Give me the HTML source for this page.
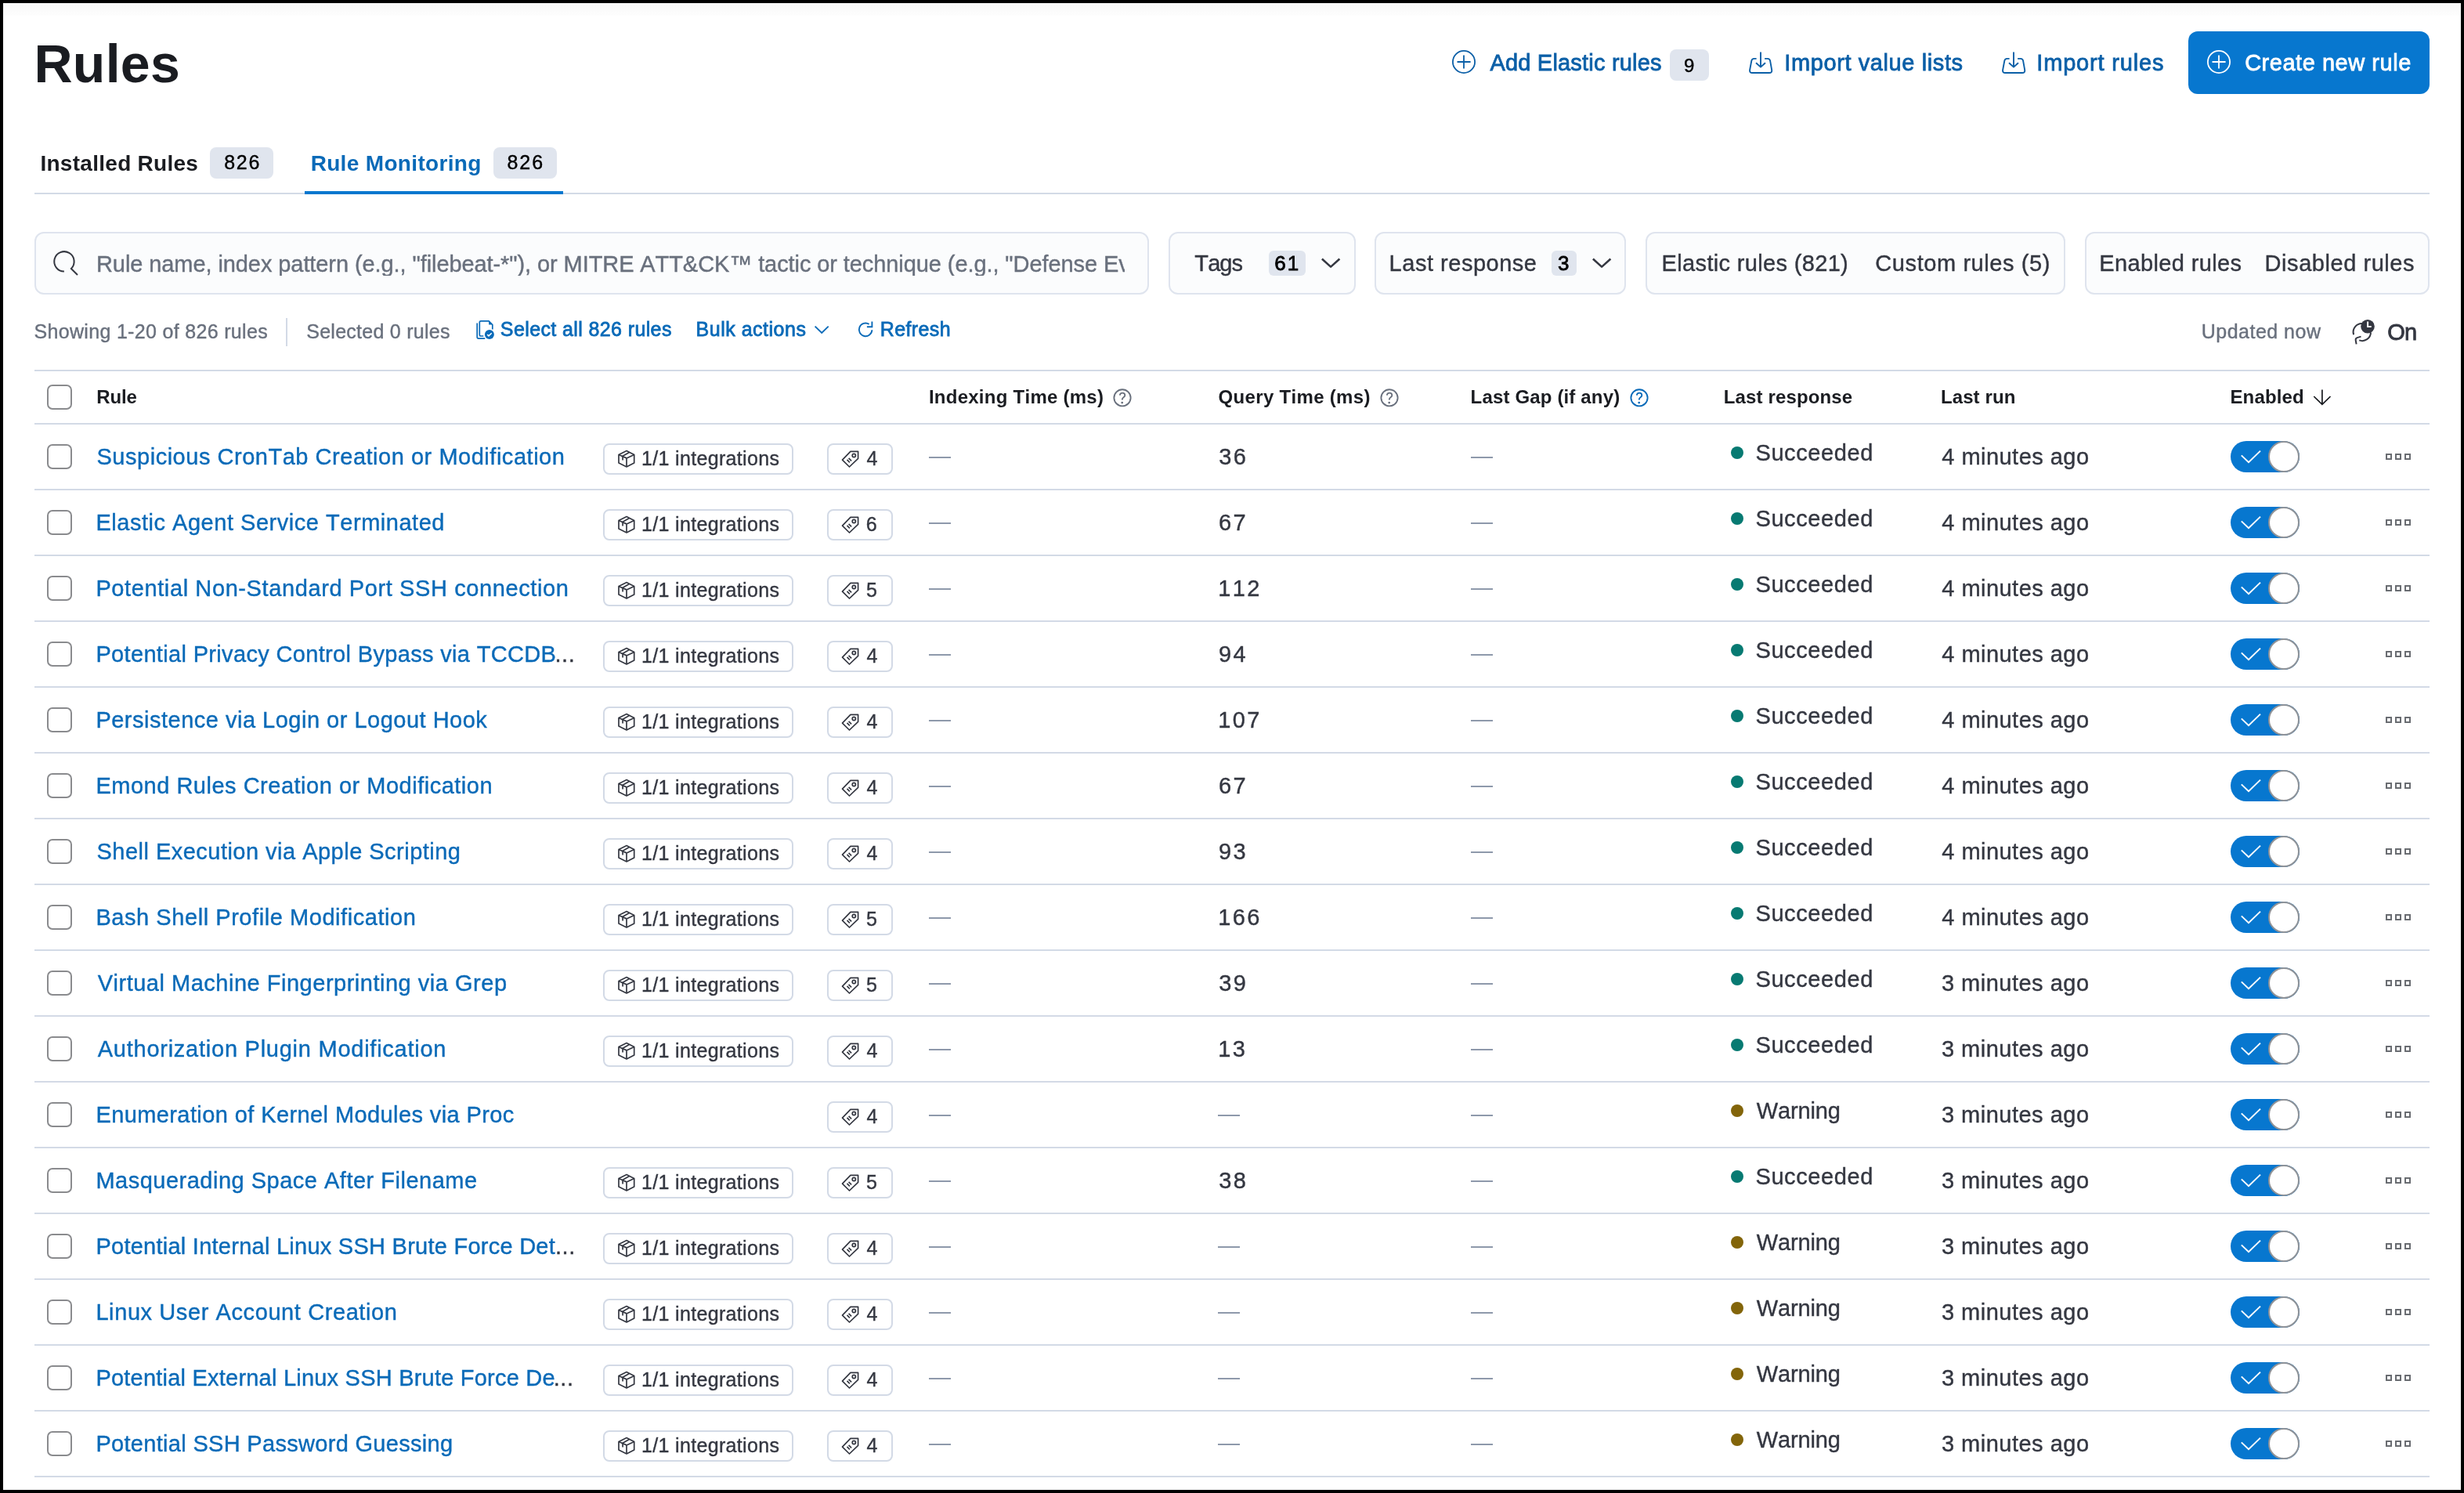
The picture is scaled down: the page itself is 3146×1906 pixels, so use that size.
<!DOCTYPE html>
<html><head><meta charset="utf-8"><title>Rules</title><style>
html,body{margin:0;padding:0;}
body{width:3146px;height:1906px;position:relative;overflow:hidden;background:#fff;font-family:"Liberation Sans",sans-serif;font-kerning:none;}
.frame{position:absolute;left:0;top:0;width:3138px;height:1898px;border:4px solid #000;}
.t{position:absolute;white-space:nowrap;}
.wrap{position:absolute;left:0;top:0;width:3146px;height:1906px;will-change:transform;}
.b{position:absolute;}
.s{position:absolute;overflow:visible;}
</style></head><body><div class="wrap">
<div class="b" style="left:4px;top:5px;width:3138px;height:15px;background:linear-gradient(#f9f9f9,#fdfdfd);"></div>
<div class="t" style="left:43.45px;top:47px;font-size:68px;line-height:68px;color:#1a1c21;letter-spacing:0.291px;font-weight:700;">Rules</div>
<svg class="s" style="left:1850px;top:60px;" width="38" height="38" viewBox="0 0 38 38" fill="none"><g stroke="#0b5fa7" stroke-width="1.8"><circle cx="19" cy="19" r="14.1"/><path d="M10.5 19H27.6M19 10.4V27.6"/></g></svg>
<div class="t" style="left:1902.44px;top:66px;font-size:29px;line-height:29px;color:#0b5fa7;letter-spacing:0.195px;-webkit-text-stroke:0.8px currentColor;">Add Elastic rules</div>
<div class="b" style="left:2132px;top:63px;width:50px;height:40px;background:#e0e5ee;border-radius:8px;"></div>
<div class="t" style="left:2149.88px;top:72px;font-size:24px;line-height:24px;color:#000;letter-spacing:2.314px;-webkit-text-stroke:0.4px currentColor;">9</div>
<svg class="s" style="left:2226px;top:60px;" width="44" height="40" viewBox="0 0 44 40" fill="none"><g stroke="#0b5fa7" stroke-width="1.9" stroke-linejoin="round"><path d="M16.6 14.9H13.6Q10.8 14.9 10.3 17.7L8.1 29.4Q7.6 33 11.3 33H33Q36.7 33 36.2 29.4L34.1 17.7Q33.6 14.9 30.8 14.9H27.1"/><path d="M22 6.4V25.4M16 20.2L22 25.6L28 20.2"/></g></svg>
<div class="t" style="left:2278.32px;top:66px;font-size:29px;line-height:29px;color:#0b5fa7;letter-spacing:0.597px;-webkit-text-stroke:0.8px currentColor;">Import value lists</div>
<svg class="s" style="left:2549px;top:60px;" width="44" height="40" viewBox="0 0 44 40" fill="none"><g stroke="#0b5fa7" stroke-width="1.9" stroke-linejoin="round"><path d="M16.6 14.9H13.6Q10.8 14.9 10.3 17.7L8.1 29.4Q7.6 33 11.3 33H33Q36.7 33 36.2 29.4L34.1 17.7Q33.6 14.9 30.8 14.9H27.1"/><path d="M22 6.4V25.4M16 20.2L22 25.6L28 20.2"/></g></svg>
<div class="t" style="left:2600.32px;top:66px;font-size:29px;line-height:29px;color:#0b5fa7;letter-spacing:0.820px;-webkit-text-stroke:0.8px currentColor;">Import rules</div>
<div class="b" style="left:2794px;top:40px;width:308px;height:80px;background:#0777cf;border-radius:12px;"></div>
<svg class="s" style="left:2814px;top:60px;" width="38" height="38" viewBox="0 0 38 38" fill="none"><g stroke="#fff" stroke-width="1.8"><circle cx="19" cy="19" r="14.1"/><path d="M10.5 19H27.6M19 10.4V27.6"/></g></svg>
<div class="t" style="left:2866.13px;top:66px;font-size:29px;line-height:29px;color:#fff;letter-spacing:0.532px;-webkit-text-stroke:0.8px currentColor;">Create new rule</div>
<div class="t" style="left:51.43px;top:195px;font-size:28px;line-height:28px;color:#1a1c21;letter-spacing:0.279px;font-weight:700;">Installed Rules</div>
<div class="b" style="left:268px;top:188px;width:81px;height:40px;background:#e0e5ee;border-radius:8px;"></div>
<div class="t" style="left:286.21px;top:195px;font-size:25px;line-height:25px;color:#000;letter-spacing:1.737px;-webkit-text-stroke:0.4px currentColor;">826</div>
<div class="t" style="left:396.63px;top:195px;font-size:28px;line-height:28px;color:#0a6ab8;letter-spacing:0.334px;font-weight:700;">Rule Monitoring</div>
<div class="b" style="left:630px;top:188px;width:81px;height:40px;background:#e0e5ee;border-radius:8px;"></div>
<div class="t" style="left:647.41px;top:195px;font-size:25px;line-height:25px;color:#000;letter-spacing:1.987px;-webkit-text-stroke:0.4px currentColor;">826</div>
<div class="b" style="left:44px;top:246px;width:3058px;height:2px;background:#d3dae6;"></div>
<div class="b" style="left:389px;top:244px;width:330px;height:4px;background:#0777cf;"></div>
<div class="b" style="left:44px;top:296px;width:1423px;height:80px;background:#fbfcfd;border:2px solid #dfe4ee;border-radius:12px;box-sizing:border-box;"></div>
<svg class="s" style="left:60px;top:312px;" width="48" height="48" viewBox="0 0 48 48" fill="none"><path d="M21.9 34.6A12.7 12.7 0 1 1 30.9 30.9L39 39" stroke="#343741" stroke-width="2"/></svg>
<div class="t" style="left:123.02px;top:323px;font-size:29px;line-height:29px;color:#69707d;letter-spacing:-0.086px;-webkit-text-stroke:0.4px currentColor;width:1313.0px;overflow:hidden;">Rule name, index pattern (e.g., &quot;filebeat-*&quot;), or MITRE ATT&amp;CK™ tactic or technique (e.g., &quot;Defense Evasion&quot;)</div>
<div class="b" style="left:1492px;top:296px;width:239px;height:80px;background:#fbfcfd;border:2px solid #dfe4ee;border-radius:12px;box-sizing:border-box;"></div>
<div class="t" style="left:1525.35px;top:322px;font-size:29px;line-height:29px;color:#343741;letter-spacing:-0.924px;-webkit-text-stroke:0.4px currentColor;">Tags</div>
<div class="b" style="left:1620px;top:320px;width:47px;height:32px;background:#e0e5ee;border-radius:6px;"></div>
<div class="t" style="left:1627.28px;top:323px;font-size:26px;line-height:26px;color:#000;letter-spacing:2.070px;-webkit-text-stroke:0.8px currentColor;">61</div>
<svg class="s" style="left:1680px;top:320px;" width="40" height="32" viewBox="0 0 40 32" fill="none"><path d="M7.9 10.5L19.1 20.6L30.4 10.5" stroke="#343741" stroke-width="2.6" stroke-linejoin="round"/></svg>
<div class="b" style="left:1755px;top:296px;width:321px;height:80px;background:#fbfcfd;border:2px solid #dfe4ee;border-radius:12px;box-sizing:border-box;"></div>
<div class="t" style="left:1773.62px;top:322px;font-size:29px;line-height:29px;color:#343741;letter-spacing:0.516px;-webkit-text-stroke:0.4px currentColor;">Last response</div>
<div class="b" style="left:1981px;top:320px;width:32px;height:32px;background:#e0e5ee;border-radius:6px;"></div>
<div class="t" style="left:1989.01px;top:323px;font-size:26px;line-height:26px;color:#000;letter-spacing:0.673px;-webkit-text-stroke:0.8px currentColor;">3</div>
<svg class="s" style="left:2026px;top:320px;" width="40" height="32" viewBox="0 0 40 32" fill="none"><path d="M7.9 10.5L19.1 20.6L30.4 10.5" stroke="#343741" stroke-width="2.6" stroke-linejoin="round"/></svg>
<div class="b" style="left:2101px;top:296px;width:536px;height:80px;background:#fbfcfd;border:2px solid #dfe4ee;border-radius:12px;box-sizing:border-box;"></div>
<div class="t" style="left:2121.62px;top:322px;font-size:29px;line-height:29px;color:#343741;letter-spacing:0.338px;-webkit-text-stroke:0.4px currentColor;">Elastic rules (821)</div>
<div class="t" style="left:2394.33px;top:322px;font-size:29px;line-height:29px;color:#343741;letter-spacing:0.583px;-webkit-text-stroke:0.4px currentColor;">Custom rules (5)</div>
<div class="b" style="left:2662px;top:296px;width:440px;height:80px;background:#fbfcfd;border:2px solid #dfe4ee;border-radius:12px;box-sizing:border-box;"></div>
<div class="t" style="left:2680.22px;top:322px;font-size:29px;line-height:29px;color:#343741;letter-spacing:0.374px;-webkit-text-stroke:0.4px currentColor;">Enabled rules</div>
<div class="t" style="left:2891.62px;top:322px;font-size:29px;line-height:29px;color:#343741;letter-spacing:0.552px;-webkit-text-stroke:0.4px currentColor;">Disabled rules</div>
<div class="t" style="left:43.46px;top:411px;font-size:25px;line-height:25px;color:#69707d;letter-spacing:0.324px;-webkit-text-stroke:0.4px currentColor;">Showing 1-20 of 826 rules</div>
<div class="b" style="left:365px;top:406px;width:2px;height:36px;background:#d3dae6;"></div>
<div class="t" style="left:391.26px;top:411px;font-size:25px;line-height:25px;color:#69707d;letter-spacing:0.258px;-webkit-text-stroke:0.4px currentColor;">Selected 0 rules</div>
<svg class="s" style="left:600px;top:404px;" width="40" height="36" viewBox="0 0 40 36" fill="none"><g stroke="#0a6ab8" stroke-width="1.7" stroke-linejoin="round"><path d="M9.2 8.6V26.3Q9.2 28.1 11 28.1H19.3"/><path d="M17.3 25H14Q12.3 25 12.3 23.3V7.5Q12.3 5.8 14 5.8H24.1L28.8 10.5V16.4"/></g><path d="M24.1 5.8V10.5H28.8Z" fill="#0a6ab8"/><circle cx="24.9" cy="22.9" r="6" fill="#0a6ab8"/><path d="M22.2 23.1L24 24.9L27.7 21.2" stroke="#fff" stroke-width="1.5"/></svg>
<div class="t" style="left:638.86px;top:408px;font-size:25px;line-height:25px;color:#0a6ab8;letter-spacing:0.385px;-webkit-text-stroke:0.8px currentColor;">Select all 826 rules</div>
<div class="t" style="left:888.55px;top:408px;font-size:25px;line-height:25px;color:#0a6ab8;letter-spacing:0.506px;-webkit-text-stroke:0.8px currentColor;">Bulk actions</div>
<svg class="s" style="left:1036px;top:410px;" width="26" height="20" viewBox="0 0 26 20" fill="none"><path d="M4.6 6.6L13.2 15L21.7 6.6" stroke="#0a6ab8" stroke-width="1.9"/></svg>
<svg class="s" style="left:1088px;top:404px;" width="34" height="32" viewBox="0 0 34 32" fill="none"><g stroke="#0a6ab8" stroke-width="1.9"><path d="M21.6 9.9A8.3 8.3 0 1 0 25.4 17.3"/><path d="M25.4 6.4V13.2H18.9"/></g></svg>
<div class="t" style="left:1123.75px;top:408px;font-size:25px;line-height:25px;color:#0a6ab8;letter-spacing:0.390px;-webkit-text-stroke:0.8px currentColor;">Refresh</div>
<div class="t" style="left:2810.77px;top:411px;font-size:25px;line-height:25px;color:#69707d;letter-spacing:0.484px;-webkit-text-stroke:0.4px currentColor;">Updated now</div>
<svg class="s" style="left:2996px;top:400px;" width="44" height="46" viewBox="0 0 44 46" fill="none"><g stroke="#343741" stroke-width="2"><path d="M20.4 13A11 11 0 0 0 9.1 27.2"/><path d="M16.2 34.4A11 11 0 0 0 31 24.4"/><path d="M18.5 29.6L13.6 31.1Q11.3 31.9 11.7 34.3L12.6 39.4"/></g><circle cx="27" cy="16.8" r="8.8" fill="#343741"/><path d="M27.1 10.6V17.1H31.7" stroke="#fff" stroke-width="2"/></svg>
<div class="t" style="left:3048.23px;top:410px;font-size:29px;line-height:29px;color:#343741;letter-spacing:-0.829px;-webkit-text-stroke:0.8px currentColor;">On</div>
<div class="b" style="left:44px;top:472px;width:3058px;height:2px;background:#d3dae6;"></div>
<div class="b" style="left:60px;top:491px;width:32px;height:32px;border:2px solid #8a8b8e;border-radius:7px;box-sizing:border-box;background:#fff;"></div>
<div class="t" style="left:123.19px;top:495px;font-size:24px;line-height:24px;color:#1a1c21;letter-spacing:-0.127px;font-weight:700;">Rule</div>
<div class="t" style="left:1185.89px;top:495px;font-size:24px;line-height:24px;color:#1a1c21;letter-spacing:0.259px;font-weight:700;">Indexing Time (ms)</div>
<svg class="s" style="left:1414px;top:490px;" width="38" height="36" viewBox="0 0 38 36" fill="none"><g stroke="#69707d" stroke-width="1.9"><circle cx="19" cy="17.8" r="10.6"/><path d="M15.8 14.6Q16.1 11.6 19.1 11.6Q22.3 11.6 22.3 14.5Q22.3 16.1 20.5 17.3Q18.8 18.4 18.8 20.6"/></g><circle cx="18.7" cy="24.1" r="1.4" fill="#69707d"/></svg>
<div class="t" style="left:1555.62px;top:495px;font-size:24px;line-height:24px;color:#1a1c21;letter-spacing:0.314px;font-weight:700;">Query Time (ms)</div>
<svg class="s" style="left:1755px;top:490px;" width="38" height="36" viewBox="0 0 38 36" fill="none"><g stroke="#69707d" stroke-width="1.9"><circle cx="19" cy="17.8" r="10.6"/><path d="M15.8 14.6Q16.1 11.6 19.1 11.6Q22.3 11.6 22.3 14.5Q22.3 16.1 20.5 17.3Q18.8 18.4 18.8 20.6"/></g><circle cx="18.7" cy="24.1" r="1.4" fill="#69707d"/></svg>
<div class="t" style="left:1877.59px;top:495px;font-size:24px;line-height:24px;color:#1a1c21;letter-spacing:0.161px;font-weight:700;">Last Gap (if any)</div>
<svg class="s" style="left:2074px;top:490px;" width="38" height="36" viewBox="0 0 38 36" fill="none"><g stroke="#0a6ab8" stroke-width="1.9"><circle cx="19" cy="17.8" r="10.6"/><path d="M15.8 14.6Q16.1 11.6 19.1 11.6Q22.3 11.6 22.3 14.5Q22.3 16.1 20.5 17.3Q18.8 18.4 18.8 20.6"/></g><circle cx="18.7" cy="24.1" r="1.4" fill="#0a6ab8"/></svg>
<div class="t" style="left:2200.79px;top:495px;font-size:24px;line-height:24px;color:#1a1c21;letter-spacing:0.133px;font-weight:700;">Last response</div>
<div class="t" style="left:2477.89px;top:495px;font-size:24px;line-height:24px;color:#1a1c21;letter-spacing:0.131px;font-weight:700;">Last run</div>
<div class="t" style="left:2847.39px;top:495px;font-size:24px;line-height:24px;color:#1a1c21;letter-spacing:0.173px;font-weight:700;">Enabled</div>
<svg class="s" style="left:2950px;top:494px;" width="30" height="26" viewBox="0 0 30 26" fill="none"><path d="M14.9 3.6V22.2M4.3 12L14.9 22.4L25.5 12" stroke="#1a1c21" stroke-width="1.7"/></svg>
<div class="b" style="left:44px;top:540px;width:3058px;height:2px;background:#d3dae6;"></div>
<div class="b" style="left:60px;top:567px;width:32px;height:32px;border:2px solid #8a8b8e;border-radius:7px;box-sizing:border-box;background:#fff;"></div>
<div class="t" style="left:123.48px;top:569px;font-size:29px;line-height:29px;color:#0a6ab8;letter-spacing:0.523px;-webkit-text-stroke:0.4px currentColor;">Suspicious CronTab Creation or Modification</div>
<div class="b" style="left:770px;top:566px;width:243px;height:40px;border:2px solid #d3dae6;border-radius:8px;box-sizing:border-box;"></div>
<svg class="s" style="left:780px;top:566px;" width="50" height="40" viewBox="0 0 50 40" fill="none"><g stroke="#343741" stroke-width="1.7" stroke-linejoin="round"><path d="M20 9.6L10 14.5V24.9L20 30L29.7 24.9V14.5Z"/><path d="M10 14.5L20 18.9L29.7 14.5M20 18.9V30"/><path d="M23.4 11.4L15.1 16.2V21.6"/></g></svg>
<div class="t" style="left:819.10px;top:573px;font-size:25px;line-height:25px;color:#343741;letter-spacing:0.324px;-webkit-text-stroke:0.4px currentColor;">1/1 integrations</div>
<div class="b" style="left:1056px;top:566px;width:84px;height:40px;border:2px solid #d3dae6;border-radius:8px;box-sizing:border-box;"></div>
<svg class="s" style="left:1066px;top:566px;" width="70" height="40" viewBox="0 0 70 40" fill="none"><g stroke="#343741" stroke-width="1.7" stroke-linejoin="round"><path d="M19.9 10.4H29.6V19.4L18.5 30L9.5 21.2Z"/><circle cx="24.3" cy="15.5" r="2.1"/><path d="M15.5 20.9L18.9 24.3M17.6 18.8L21.1 22.3"/></g></svg>
<div class="t" style="left:1106.43px;top:573px;font-size:25px;line-height:25px;color:#343741;letter-spacing:0.000px;-webkit-text-stroke:0.4px currentColor;">4</div>
<div class="b" style="left:1186px;top:583px;width:28px;height:2px;background:#8e99ab;"></div>
<div class="t" style="left:1556.30px;top:569px;font-size:29px;line-height:29px;color:#343741;letter-spacing:2.400px;-webkit-text-stroke:0.4px currentColor;">36</div>
<div class="b" style="left:1878px;top:583px;width:28px;height:2px;background:#8e99ab;"></div>
<div class="b" style="left:2210px;top:570px;width:16px;height:16px;background:#077a72;border-radius:50%;"></div>
<div class="t" style="left:2241.48px;top:564px;font-size:29px;line-height:29px;color:#343741;letter-spacing:0.584px;-webkit-text-stroke:0.4px currentColor;">Succeeded</div>
<div class="t" style="left:2479.33px;top:569px;font-size:29px;line-height:29px;color:#343741;letter-spacing:0.459px;-webkit-text-stroke:0.4px currentColor;">4 minutes ago</div>
<div class="b" style="left:2848px;top:563px;width:88px;height:40px;background:#0777cf;border-radius:20px;"></div>
<div class="b" style="left:2896px;top:563px;width:40px;height:40px;background:#fff;border:2px solid #909398;border-radius:50%;box-sizing:border-box;"></div>
<svg class="s" style="left:2848px;top:563px;" width="48" height="40" viewBox="0 0 48 40" fill="none"><path d="M13.8 18.4L23 27.2L38 12.6" stroke="#fff" stroke-width="2"/></svg>
<div class="b" style="left:3046px;top:579px;width:8px;height:8px;border:2px solid #6a6d72;box-sizing:border-box;"></div>
<div class="b" style="left:3058px;top:579px;width:8px;height:8px;border:2px solid #6a6d72;box-sizing:border-box;"></div>
<div class="b" style="left:3070px;top:579px;width:8px;height:8px;border:2px solid #6a6d72;box-sizing:border-box;"></div>
<div class="b" style="left:44px;top:624px;width:3058px;height:2px;background:#d3dae6;"></div>
<div class="b" style="left:60px;top:651px;width:32px;height:32px;border:2px solid #8a8b8e;border-radius:7px;box-sizing:border-box;background:#fff;"></div>
<div class="t" style="left:122.42px;top:653px;font-size:29px;line-height:29px;color:#0a6ab8;letter-spacing:0.526px;-webkit-text-stroke:0.4px currentColor;">Elastic Agent Service Terminated</div>
<div class="b" style="left:770px;top:650px;width:243px;height:40px;border:2px solid #d3dae6;border-radius:8px;box-sizing:border-box;"></div>
<svg class="s" style="left:780px;top:650px;" width="50" height="40" viewBox="0 0 50 40" fill="none"><g stroke="#343741" stroke-width="1.7" stroke-linejoin="round"><path d="M20 9.6L10 14.5V24.9L20 30L29.7 24.9V14.5Z"/><path d="M10 14.5L20 18.9L29.7 14.5M20 18.9V30"/><path d="M23.4 11.4L15.1 16.2V21.6"/></g></svg>
<div class="t" style="left:819.10px;top:657px;font-size:25px;line-height:25px;color:#343741;letter-spacing:0.324px;-webkit-text-stroke:0.4px currentColor;">1/1 integrations</div>
<div class="b" style="left:1056px;top:650px;width:84px;height:40px;border:2px solid #d3dae6;border-radius:8px;box-sizing:border-box;"></div>
<svg class="s" style="left:1066px;top:650px;" width="70" height="40" viewBox="0 0 70 40" fill="none"><g stroke="#343741" stroke-width="1.7" stroke-linejoin="round"><path d="M19.9 10.4H29.6V19.4L18.5 30L9.5 21.2Z"/><circle cx="24.3" cy="15.5" r="2.1"/><path d="M15.5 20.9L18.9 24.3M17.6 18.8L21.1 22.3"/></g></svg>
<div class="t" style="left:1105.73px;top:657px;font-size:25px;line-height:25px;color:#343741;letter-spacing:0.000px;-webkit-text-stroke:0.4px currentColor;">6</div>
<div class="b" style="left:1186px;top:667px;width:28px;height:2px;background:#8e99ab;"></div>
<div class="t" style="left:1555.93px;top:653px;font-size:29px;line-height:29px;color:#343741;letter-spacing:2.400px;-webkit-text-stroke:0.4px currentColor;">67</div>
<div class="b" style="left:1878px;top:667px;width:28px;height:2px;background:#8e99ab;"></div>
<div class="b" style="left:2210px;top:654px;width:16px;height:16px;background:#077a72;border-radius:50%;"></div>
<div class="t" style="left:2241.48px;top:648px;font-size:29px;line-height:29px;color:#343741;letter-spacing:0.584px;-webkit-text-stroke:0.4px currentColor;">Succeeded</div>
<div class="t" style="left:2479.33px;top:653px;font-size:29px;line-height:29px;color:#343741;letter-spacing:0.459px;-webkit-text-stroke:0.4px currentColor;">4 minutes ago</div>
<div class="b" style="left:2848px;top:647px;width:88px;height:40px;background:#0777cf;border-radius:20px;"></div>
<div class="b" style="left:2896px;top:647px;width:40px;height:40px;background:#fff;border:2px solid #909398;border-radius:50%;box-sizing:border-box;"></div>
<svg class="s" style="left:2848px;top:647px;" width="48" height="40" viewBox="0 0 48 40" fill="none"><path d="M13.8 18.4L23 27.2L38 12.6" stroke="#fff" stroke-width="2"/></svg>
<div class="b" style="left:3046px;top:663px;width:8px;height:8px;border:2px solid #6a6d72;box-sizing:border-box;"></div>
<div class="b" style="left:3058px;top:663px;width:8px;height:8px;border:2px solid #6a6d72;box-sizing:border-box;"></div>
<div class="b" style="left:3070px;top:663px;width:8px;height:8px;border:2px solid #6a6d72;box-sizing:border-box;"></div>
<div class="b" style="left:44px;top:708px;width:3058px;height:2px;background:#d3dae6;"></div>
<div class="b" style="left:60px;top:735px;width:32px;height:32px;border:2px solid #8a8b8e;border-radius:7px;box-sizing:border-box;background:#fff;"></div>
<div class="t" style="left:122.42px;top:737px;font-size:29px;line-height:29px;color:#0a6ab8;letter-spacing:0.603px;-webkit-text-stroke:0.4px currentColor;">Potential Non-Standard Port SSH connection</div>
<div class="b" style="left:770px;top:734px;width:243px;height:40px;border:2px solid #d3dae6;border-radius:8px;box-sizing:border-box;"></div>
<svg class="s" style="left:780px;top:734px;" width="50" height="40" viewBox="0 0 50 40" fill="none"><g stroke="#343741" stroke-width="1.7" stroke-linejoin="round"><path d="M20 9.6L10 14.5V24.9L20 30L29.7 24.9V14.5Z"/><path d="M10 14.5L20 18.9L29.7 14.5M20 18.9V30"/><path d="M23.4 11.4L15.1 16.2V21.6"/></g></svg>
<div class="t" style="left:819.10px;top:741px;font-size:25px;line-height:25px;color:#343741;letter-spacing:0.324px;-webkit-text-stroke:0.4px currentColor;">1/1 integrations</div>
<div class="b" style="left:1056px;top:734px;width:84px;height:40px;border:2px solid #d3dae6;border-radius:8px;box-sizing:border-box;"></div>
<svg class="s" style="left:1066px;top:734px;" width="70" height="40" viewBox="0 0 70 40" fill="none"><g stroke="#343741" stroke-width="1.7" stroke-linejoin="round"><path d="M19.9 10.4H29.6V19.4L18.5 30L9.5 21.2Z"/><circle cx="24.3" cy="15.5" r="2.1"/><path d="M15.5 20.9L18.9 24.3M17.6 18.8L21.1 22.3"/></g></svg>
<div class="t" style="left:1106.00px;top:741px;font-size:25px;line-height:25px;color:#343741;letter-spacing:0.000px;-webkit-text-stroke:0.4px currentColor;">5</div>
<div class="b" style="left:1186px;top:751px;width:28px;height:2px;background:#8e99ab;"></div>
<div class="t" style="left:1555.19px;top:737px;font-size:29px;line-height:29px;color:#343741;letter-spacing:2.400px;-webkit-text-stroke:0.4px currentColor;">112</div>
<div class="b" style="left:1878px;top:751px;width:28px;height:2px;background:#8e99ab;"></div>
<div class="b" style="left:2210px;top:738px;width:16px;height:16px;background:#077a72;border-radius:50%;"></div>
<div class="t" style="left:2241.48px;top:732px;font-size:29px;line-height:29px;color:#343741;letter-spacing:0.584px;-webkit-text-stroke:0.4px currentColor;">Succeeded</div>
<div class="t" style="left:2479.33px;top:737px;font-size:29px;line-height:29px;color:#343741;letter-spacing:0.459px;-webkit-text-stroke:0.4px currentColor;">4 minutes ago</div>
<div class="b" style="left:2848px;top:731px;width:88px;height:40px;background:#0777cf;border-radius:20px;"></div>
<div class="b" style="left:2896px;top:731px;width:40px;height:40px;background:#fff;border:2px solid #909398;border-radius:50%;box-sizing:border-box;"></div>
<svg class="s" style="left:2848px;top:731px;" width="48" height="40" viewBox="0 0 48 40" fill="none"><path d="M13.8 18.4L23 27.2L38 12.6" stroke="#fff" stroke-width="2"/></svg>
<div class="b" style="left:3046px;top:747px;width:8px;height:8px;border:2px solid #6a6d72;box-sizing:border-box;"></div>
<div class="b" style="left:3058px;top:747px;width:8px;height:8px;border:2px solid #6a6d72;box-sizing:border-box;"></div>
<div class="b" style="left:3070px;top:747px;width:8px;height:8px;border:2px solid #6a6d72;box-sizing:border-box;"></div>
<div class="b" style="left:44px;top:792px;width:3058px;height:2px;background:#d3dae6;"></div>
<div class="b" style="left:60px;top:819px;width:32px;height:32px;border:2px solid #8a8b8e;border-radius:7px;box-sizing:border-box;background:#fff;"></div>
<div class="t" style="left:122.42px;top:821px;font-size:29px;line-height:29px;color:#0a6ab8;letter-spacing:0.335px;-webkit-text-stroke:0.4px currentColor;">Potential Privacy Control Bypass via TCCDB</div>
<div class="t" style="left:708.38px;top:821px;font-size:29px;line-height:29px;color:#343741;letter-spacing:0.600px;-webkit-text-stroke:0.4px currentColor;">...</div>
<div class="b" style="left:770px;top:818px;width:243px;height:40px;border:2px solid #d3dae6;border-radius:8px;box-sizing:border-box;"></div>
<svg class="s" style="left:780px;top:818px;" width="50" height="40" viewBox="0 0 50 40" fill="none"><g stroke="#343741" stroke-width="1.7" stroke-linejoin="round"><path d="M20 9.6L10 14.5V24.9L20 30L29.7 24.9V14.5Z"/><path d="M10 14.5L20 18.9L29.7 14.5M20 18.9V30"/><path d="M23.4 11.4L15.1 16.2V21.6"/></g></svg>
<div class="t" style="left:819.10px;top:825px;font-size:25px;line-height:25px;color:#343741;letter-spacing:0.324px;-webkit-text-stroke:0.4px currentColor;">1/1 integrations</div>
<div class="b" style="left:1056px;top:818px;width:84px;height:40px;border:2px solid #d3dae6;border-radius:8px;box-sizing:border-box;"></div>
<svg class="s" style="left:1066px;top:818px;" width="70" height="40" viewBox="0 0 70 40" fill="none"><g stroke="#343741" stroke-width="1.7" stroke-linejoin="round"><path d="M19.9 10.4H29.6V19.4L18.5 30L9.5 21.2Z"/><circle cx="24.3" cy="15.5" r="2.1"/><path d="M15.5 20.9L18.9 24.3M17.6 18.8L21.1 22.3"/></g></svg>
<div class="t" style="left:1106.43px;top:825px;font-size:25px;line-height:25px;color:#343741;letter-spacing:0.000px;-webkit-text-stroke:0.4px currentColor;">4</div>
<div class="b" style="left:1186px;top:835px;width:28px;height:2px;background:#8e99ab;"></div>
<div class="t" style="left:1556.04px;top:821px;font-size:29px;line-height:29px;color:#343741;letter-spacing:2.400px;-webkit-text-stroke:0.4px currentColor;">94</div>
<div class="b" style="left:1878px;top:835px;width:28px;height:2px;background:#8e99ab;"></div>
<div class="b" style="left:2210px;top:822px;width:16px;height:16px;background:#077a72;border-radius:50%;"></div>
<div class="t" style="left:2241.48px;top:816px;font-size:29px;line-height:29px;color:#343741;letter-spacing:0.584px;-webkit-text-stroke:0.4px currentColor;">Succeeded</div>
<div class="t" style="left:2479.33px;top:821px;font-size:29px;line-height:29px;color:#343741;letter-spacing:0.459px;-webkit-text-stroke:0.4px currentColor;">4 minutes ago</div>
<div class="b" style="left:2848px;top:815px;width:88px;height:40px;background:#0777cf;border-radius:20px;"></div>
<div class="b" style="left:2896px;top:815px;width:40px;height:40px;background:#fff;border:2px solid #909398;border-radius:50%;box-sizing:border-box;"></div>
<svg class="s" style="left:2848px;top:815px;" width="48" height="40" viewBox="0 0 48 40" fill="none"><path d="M13.8 18.4L23 27.2L38 12.6" stroke="#fff" stroke-width="2"/></svg>
<div class="b" style="left:3046px;top:831px;width:8px;height:8px;border:2px solid #6a6d72;box-sizing:border-box;"></div>
<div class="b" style="left:3058px;top:831px;width:8px;height:8px;border:2px solid #6a6d72;box-sizing:border-box;"></div>
<div class="b" style="left:3070px;top:831px;width:8px;height:8px;border:2px solid #6a6d72;box-sizing:border-box;"></div>
<div class="b" style="left:44px;top:876px;width:3058px;height:2px;background:#d3dae6;"></div>
<div class="b" style="left:60px;top:903px;width:32px;height:32px;border:2px solid #8a8b8e;border-radius:7px;box-sizing:border-box;background:#fff;"></div>
<div class="t" style="left:122.42px;top:905px;font-size:29px;line-height:29px;color:#0a6ab8;letter-spacing:0.498px;-webkit-text-stroke:0.4px currentColor;">Persistence via Login or Logout Hook</div>
<div class="b" style="left:770px;top:902px;width:243px;height:40px;border:2px solid #d3dae6;border-radius:8px;box-sizing:border-box;"></div>
<svg class="s" style="left:780px;top:902px;" width="50" height="40" viewBox="0 0 50 40" fill="none"><g stroke="#343741" stroke-width="1.7" stroke-linejoin="round"><path d="M20 9.6L10 14.5V24.9L20 30L29.7 24.9V14.5Z"/><path d="M10 14.5L20 18.9L29.7 14.5M20 18.9V30"/><path d="M23.4 11.4L15.1 16.2V21.6"/></g></svg>
<div class="t" style="left:819.10px;top:909px;font-size:25px;line-height:25px;color:#343741;letter-spacing:0.324px;-webkit-text-stroke:0.4px currentColor;">1/1 integrations</div>
<div class="b" style="left:1056px;top:902px;width:84px;height:40px;border:2px solid #d3dae6;border-radius:8px;box-sizing:border-box;"></div>
<svg class="s" style="left:1066px;top:902px;" width="70" height="40" viewBox="0 0 70 40" fill="none"><g stroke="#343741" stroke-width="1.7" stroke-linejoin="round"><path d="M19.9 10.4H29.6V19.4L18.5 30L9.5 21.2Z"/><circle cx="24.3" cy="15.5" r="2.1"/><path d="M15.5 20.9L18.9 24.3M17.6 18.8L21.1 22.3"/></g></svg>
<div class="t" style="left:1106.43px;top:909px;font-size:25px;line-height:25px;color:#343741;letter-spacing:0.000px;-webkit-text-stroke:0.4px currentColor;">4</div>
<div class="b" style="left:1186px;top:919px;width:28px;height:2px;background:#8e99ab;"></div>
<div class="t" style="left:1555.19px;top:905px;font-size:29px;line-height:29px;color:#343741;letter-spacing:2.400px;-webkit-text-stroke:0.4px currentColor;">107</div>
<div class="b" style="left:1878px;top:919px;width:28px;height:2px;background:#8e99ab;"></div>
<div class="b" style="left:2210px;top:906px;width:16px;height:16px;background:#077a72;border-radius:50%;"></div>
<div class="t" style="left:2241.48px;top:900px;font-size:29px;line-height:29px;color:#343741;letter-spacing:0.584px;-webkit-text-stroke:0.4px currentColor;">Succeeded</div>
<div class="t" style="left:2479.33px;top:905px;font-size:29px;line-height:29px;color:#343741;letter-spacing:0.459px;-webkit-text-stroke:0.4px currentColor;">4 minutes ago</div>
<div class="b" style="left:2848px;top:899px;width:88px;height:40px;background:#0777cf;border-radius:20px;"></div>
<div class="b" style="left:2896px;top:899px;width:40px;height:40px;background:#fff;border:2px solid #909398;border-radius:50%;box-sizing:border-box;"></div>
<svg class="s" style="left:2848px;top:899px;" width="48" height="40" viewBox="0 0 48 40" fill="none"><path d="M13.8 18.4L23 27.2L38 12.6" stroke="#fff" stroke-width="2"/></svg>
<div class="b" style="left:3046px;top:915px;width:8px;height:8px;border:2px solid #6a6d72;box-sizing:border-box;"></div>
<div class="b" style="left:3058px;top:915px;width:8px;height:8px;border:2px solid #6a6d72;box-sizing:border-box;"></div>
<div class="b" style="left:3070px;top:915px;width:8px;height:8px;border:2px solid #6a6d72;box-sizing:border-box;"></div>
<div class="b" style="left:44px;top:960px;width:3058px;height:2px;background:#d3dae6;"></div>
<div class="b" style="left:60px;top:987px;width:32px;height:32px;border:2px solid #8a8b8e;border-radius:7px;box-sizing:border-box;background:#fff;"></div>
<div class="t" style="left:122.42px;top:989px;font-size:29px;line-height:29px;color:#0a6ab8;letter-spacing:0.508px;-webkit-text-stroke:0.4px currentColor;">Emond Rules Creation or Modification</div>
<div class="b" style="left:770px;top:986px;width:243px;height:40px;border:2px solid #d3dae6;border-radius:8px;box-sizing:border-box;"></div>
<svg class="s" style="left:780px;top:986px;" width="50" height="40" viewBox="0 0 50 40" fill="none"><g stroke="#343741" stroke-width="1.7" stroke-linejoin="round"><path d="M20 9.6L10 14.5V24.9L20 30L29.7 24.9V14.5Z"/><path d="M10 14.5L20 18.9L29.7 14.5M20 18.9V30"/><path d="M23.4 11.4L15.1 16.2V21.6"/></g></svg>
<div class="t" style="left:819.10px;top:993px;font-size:25px;line-height:25px;color:#343741;letter-spacing:0.324px;-webkit-text-stroke:0.4px currentColor;">1/1 integrations</div>
<div class="b" style="left:1056px;top:986px;width:84px;height:40px;border:2px solid #d3dae6;border-radius:8px;box-sizing:border-box;"></div>
<svg class="s" style="left:1066px;top:986px;" width="70" height="40" viewBox="0 0 70 40" fill="none"><g stroke="#343741" stroke-width="1.7" stroke-linejoin="round"><path d="M19.9 10.4H29.6V19.4L18.5 30L9.5 21.2Z"/><circle cx="24.3" cy="15.5" r="2.1"/><path d="M15.5 20.9L18.9 24.3M17.6 18.8L21.1 22.3"/></g></svg>
<div class="t" style="left:1106.43px;top:993px;font-size:25px;line-height:25px;color:#343741;letter-spacing:0.000px;-webkit-text-stroke:0.4px currentColor;">4</div>
<div class="b" style="left:1186px;top:1003px;width:28px;height:2px;background:#8e99ab;"></div>
<div class="t" style="left:1555.93px;top:989px;font-size:29px;line-height:29px;color:#343741;letter-spacing:2.400px;-webkit-text-stroke:0.4px currentColor;">67</div>
<div class="b" style="left:1878px;top:1003px;width:28px;height:2px;background:#8e99ab;"></div>
<div class="b" style="left:2210px;top:990px;width:16px;height:16px;background:#077a72;border-radius:50%;"></div>
<div class="t" style="left:2241.48px;top:984px;font-size:29px;line-height:29px;color:#343741;letter-spacing:0.584px;-webkit-text-stroke:0.4px currentColor;">Succeeded</div>
<div class="t" style="left:2479.33px;top:989px;font-size:29px;line-height:29px;color:#343741;letter-spacing:0.459px;-webkit-text-stroke:0.4px currentColor;">4 minutes ago</div>
<div class="b" style="left:2848px;top:983px;width:88px;height:40px;background:#0777cf;border-radius:20px;"></div>
<div class="b" style="left:2896px;top:983px;width:40px;height:40px;background:#fff;border:2px solid #909398;border-radius:50%;box-sizing:border-box;"></div>
<svg class="s" style="left:2848px;top:983px;" width="48" height="40" viewBox="0 0 48 40" fill="none"><path d="M13.8 18.4L23 27.2L38 12.6" stroke="#fff" stroke-width="2"/></svg>
<div class="b" style="left:3046px;top:999px;width:8px;height:8px;border:2px solid #6a6d72;box-sizing:border-box;"></div>
<div class="b" style="left:3058px;top:999px;width:8px;height:8px;border:2px solid #6a6d72;box-sizing:border-box;"></div>
<div class="b" style="left:3070px;top:999px;width:8px;height:8px;border:2px solid #6a6d72;box-sizing:border-box;"></div>
<div class="b" style="left:44px;top:1044px;width:3058px;height:2px;background:#d3dae6;"></div>
<div class="b" style="left:60px;top:1071px;width:32px;height:32px;border:2px solid #8a8b8e;border-radius:7px;box-sizing:border-box;background:#fff;"></div>
<div class="t" style="left:123.48px;top:1073px;font-size:29px;line-height:29px;color:#0a6ab8;letter-spacing:0.481px;-webkit-text-stroke:0.4px currentColor;">Shell Execution via Apple Scripting</div>
<div class="b" style="left:770px;top:1070px;width:243px;height:40px;border:2px solid #d3dae6;border-radius:8px;box-sizing:border-box;"></div>
<svg class="s" style="left:780px;top:1070px;" width="50" height="40" viewBox="0 0 50 40" fill="none"><g stroke="#343741" stroke-width="1.7" stroke-linejoin="round"><path d="M20 9.6L10 14.5V24.9L20 30L29.7 24.9V14.5Z"/><path d="M10 14.5L20 18.9L29.7 14.5M20 18.9V30"/><path d="M23.4 11.4L15.1 16.2V21.6"/></g></svg>
<div class="t" style="left:819.10px;top:1077px;font-size:25px;line-height:25px;color:#343741;letter-spacing:0.324px;-webkit-text-stroke:0.4px currentColor;">1/1 integrations</div>
<div class="b" style="left:1056px;top:1070px;width:84px;height:40px;border:2px solid #d3dae6;border-radius:8px;box-sizing:border-box;"></div>
<svg class="s" style="left:1066px;top:1070px;" width="70" height="40" viewBox="0 0 70 40" fill="none"><g stroke="#343741" stroke-width="1.7" stroke-linejoin="round"><path d="M19.9 10.4H29.6V19.4L18.5 30L9.5 21.2Z"/><circle cx="24.3" cy="15.5" r="2.1"/><path d="M15.5 20.9L18.9 24.3M17.6 18.8L21.1 22.3"/></g></svg>
<div class="t" style="left:1106.43px;top:1077px;font-size:25px;line-height:25px;color:#343741;letter-spacing:0.000px;-webkit-text-stroke:0.4px currentColor;">4</div>
<div class="b" style="left:1186px;top:1087px;width:28px;height:2px;background:#8e99ab;"></div>
<div class="t" style="left:1556.04px;top:1073px;font-size:29px;line-height:29px;color:#343741;letter-spacing:2.400px;-webkit-text-stroke:0.4px currentColor;">93</div>
<div class="b" style="left:1878px;top:1087px;width:28px;height:2px;background:#8e99ab;"></div>
<div class="b" style="left:2210px;top:1074px;width:16px;height:16px;background:#077a72;border-radius:50%;"></div>
<div class="t" style="left:2241.48px;top:1068px;font-size:29px;line-height:29px;color:#343741;letter-spacing:0.584px;-webkit-text-stroke:0.4px currentColor;">Succeeded</div>
<div class="t" style="left:2479.33px;top:1073px;font-size:29px;line-height:29px;color:#343741;letter-spacing:0.459px;-webkit-text-stroke:0.4px currentColor;">4 minutes ago</div>
<div class="b" style="left:2848px;top:1067px;width:88px;height:40px;background:#0777cf;border-radius:20px;"></div>
<div class="b" style="left:2896px;top:1067px;width:40px;height:40px;background:#fff;border:2px solid #909398;border-radius:50%;box-sizing:border-box;"></div>
<svg class="s" style="left:2848px;top:1067px;" width="48" height="40" viewBox="0 0 48 40" fill="none"><path d="M13.8 18.4L23 27.2L38 12.6" stroke="#fff" stroke-width="2"/></svg>
<div class="b" style="left:3046px;top:1083px;width:8px;height:8px;border:2px solid #6a6d72;box-sizing:border-box;"></div>
<div class="b" style="left:3058px;top:1083px;width:8px;height:8px;border:2px solid #6a6d72;box-sizing:border-box;"></div>
<div class="b" style="left:3070px;top:1083px;width:8px;height:8px;border:2px solid #6a6d72;box-sizing:border-box;"></div>
<div class="b" style="left:44px;top:1128px;width:3058px;height:2px;background:#d3dae6;"></div>
<div class="b" style="left:60px;top:1155px;width:32px;height:32px;border:2px solid #8a8b8e;border-radius:7px;box-sizing:border-box;background:#fff;"></div>
<div class="t" style="left:122.42px;top:1157px;font-size:29px;line-height:29px;color:#0a6ab8;letter-spacing:0.559px;-webkit-text-stroke:0.4px currentColor;">Bash Shell Profile Modification</div>
<div class="b" style="left:770px;top:1154px;width:243px;height:40px;border:2px solid #d3dae6;border-radius:8px;box-sizing:border-box;"></div>
<svg class="s" style="left:780px;top:1154px;" width="50" height="40" viewBox="0 0 50 40" fill="none"><g stroke="#343741" stroke-width="1.7" stroke-linejoin="round"><path d="M20 9.6L10 14.5V24.9L20 30L29.7 24.9V14.5Z"/><path d="M10 14.5L20 18.9L29.7 14.5M20 18.9V30"/><path d="M23.4 11.4L15.1 16.2V21.6"/></g></svg>
<div class="t" style="left:819.10px;top:1161px;font-size:25px;line-height:25px;color:#343741;letter-spacing:0.324px;-webkit-text-stroke:0.4px currentColor;">1/1 integrations</div>
<div class="b" style="left:1056px;top:1154px;width:84px;height:40px;border:2px solid #d3dae6;border-radius:8px;box-sizing:border-box;"></div>
<svg class="s" style="left:1066px;top:1154px;" width="70" height="40" viewBox="0 0 70 40" fill="none"><g stroke="#343741" stroke-width="1.7" stroke-linejoin="round"><path d="M19.9 10.4H29.6V19.4L18.5 30L9.5 21.2Z"/><circle cx="24.3" cy="15.5" r="2.1"/><path d="M15.5 20.9L18.9 24.3M17.6 18.8L21.1 22.3"/></g></svg>
<div class="t" style="left:1106.00px;top:1161px;font-size:25px;line-height:25px;color:#343741;letter-spacing:0.000px;-webkit-text-stroke:0.4px currentColor;">5</div>
<div class="b" style="left:1186px;top:1171px;width:28px;height:2px;background:#8e99ab;"></div>
<div class="t" style="left:1555.19px;top:1157px;font-size:29px;line-height:29px;color:#343741;letter-spacing:2.400px;-webkit-text-stroke:0.4px currentColor;">166</div>
<div class="b" style="left:1878px;top:1171px;width:28px;height:2px;background:#8e99ab;"></div>
<div class="b" style="left:2210px;top:1158px;width:16px;height:16px;background:#077a72;border-radius:50%;"></div>
<div class="t" style="left:2241.48px;top:1152px;font-size:29px;line-height:29px;color:#343741;letter-spacing:0.584px;-webkit-text-stroke:0.4px currentColor;">Succeeded</div>
<div class="t" style="left:2479.33px;top:1157px;font-size:29px;line-height:29px;color:#343741;letter-spacing:0.459px;-webkit-text-stroke:0.4px currentColor;">4 minutes ago</div>
<div class="b" style="left:2848px;top:1151px;width:88px;height:40px;background:#0777cf;border-radius:20px;"></div>
<div class="b" style="left:2896px;top:1151px;width:40px;height:40px;background:#fff;border:2px solid #909398;border-radius:50%;box-sizing:border-box;"></div>
<svg class="s" style="left:2848px;top:1151px;" width="48" height="40" viewBox="0 0 48 40" fill="none"><path d="M13.8 18.4L23 27.2L38 12.6" stroke="#fff" stroke-width="2"/></svg>
<div class="b" style="left:3046px;top:1167px;width:8px;height:8px;border:2px solid #6a6d72;box-sizing:border-box;"></div>
<div class="b" style="left:3058px;top:1167px;width:8px;height:8px;border:2px solid #6a6d72;box-sizing:border-box;"></div>
<div class="b" style="left:3070px;top:1167px;width:8px;height:8px;border:2px solid #6a6d72;box-sizing:border-box;"></div>
<div class="b" style="left:44px;top:1212px;width:3058px;height:2px;background:#d3dae6;"></div>
<div class="b" style="left:60px;top:1239px;width:32px;height:32px;border:2px solid #8a8b8e;border-radius:7px;box-sizing:border-box;background:#fff;"></div>
<div class="t" style="left:124.67px;top:1241px;font-size:29px;line-height:29px;color:#0a6ab8;letter-spacing:0.512px;-webkit-text-stroke:0.4px currentColor;">Virtual Machine Fingerprinting via Grep</div>
<div class="b" style="left:770px;top:1238px;width:243px;height:40px;border:2px solid #d3dae6;border-radius:8px;box-sizing:border-box;"></div>
<svg class="s" style="left:780px;top:1238px;" width="50" height="40" viewBox="0 0 50 40" fill="none"><g stroke="#343741" stroke-width="1.7" stroke-linejoin="round"><path d="M20 9.6L10 14.5V24.9L20 30L29.7 24.9V14.5Z"/><path d="M10 14.5L20 18.9L29.7 14.5M20 18.9V30"/><path d="M23.4 11.4L15.1 16.2V21.6"/></g></svg>
<div class="t" style="left:819.10px;top:1245px;font-size:25px;line-height:25px;color:#343741;letter-spacing:0.324px;-webkit-text-stroke:0.4px currentColor;">1/1 integrations</div>
<div class="b" style="left:1056px;top:1238px;width:84px;height:40px;border:2px solid #d3dae6;border-radius:8px;box-sizing:border-box;"></div>
<svg class="s" style="left:1066px;top:1238px;" width="70" height="40" viewBox="0 0 70 40" fill="none"><g stroke="#343741" stroke-width="1.7" stroke-linejoin="round"><path d="M19.9 10.4H29.6V19.4L18.5 30L9.5 21.2Z"/><circle cx="24.3" cy="15.5" r="2.1"/><path d="M15.5 20.9L18.9 24.3M17.6 18.8L21.1 22.3"/></g></svg>
<div class="t" style="left:1106.00px;top:1245px;font-size:25px;line-height:25px;color:#343741;letter-spacing:0.000px;-webkit-text-stroke:0.4px currentColor;">5</div>
<div class="b" style="left:1186px;top:1255px;width:28px;height:2px;background:#8e99ab;"></div>
<div class="t" style="left:1556.30px;top:1241px;font-size:29px;line-height:29px;color:#343741;letter-spacing:2.400px;-webkit-text-stroke:0.4px currentColor;">39</div>
<div class="b" style="left:1878px;top:1255px;width:28px;height:2px;background:#8e99ab;"></div>
<div class="b" style="left:2210px;top:1242px;width:16px;height:16px;background:#077a72;border-radius:50%;"></div>
<div class="t" style="left:2241.48px;top:1236px;font-size:29px;line-height:29px;color:#343741;letter-spacing:0.584px;-webkit-text-stroke:0.4px currentColor;">Succeeded</div>
<div class="t" style="left:2478.90px;top:1241px;font-size:29px;line-height:29px;color:#343741;letter-spacing:0.496px;-webkit-text-stroke:0.4px currentColor;">3 minutes ago</div>
<div class="b" style="left:2848px;top:1235px;width:88px;height:40px;background:#0777cf;border-radius:20px;"></div>
<div class="b" style="left:2896px;top:1235px;width:40px;height:40px;background:#fff;border:2px solid #909398;border-radius:50%;box-sizing:border-box;"></div>
<svg class="s" style="left:2848px;top:1235px;" width="48" height="40" viewBox="0 0 48 40" fill="none"><path d="M13.8 18.4L23 27.2L38 12.6" stroke="#fff" stroke-width="2"/></svg>
<div class="b" style="left:3046px;top:1251px;width:8px;height:8px;border:2px solid #6a6d72;box-sizing:border-box;"></div>
<div class="b" style="left:3058px;top:1251px;width:8px;height:8px;border:2px solid #6a6d72;box-sizing:border-box;"></div>
<div class="b" style="left:3070px;top:1251px;width:8px;height:8px;border:2px solid #6a6d72;box-sizing:border-box;"></div>
<div class="b" style="left:44px;top:1296px;width:3058px;height:2px;background:#d3dae6;"></div>
<div class="b" style="left:60px;top:1323px;width:32px;height:32px;border:2px solid #8a8b8e;border-radius:7px;box-sizing:border-box;background:#fff;"></div>
<div class="t" style="left:124.74px;top:1325px;font-size:29px;line-height:29px;color:#0a6ab8;letter-spacing:0.750px;-webkit-text-stroke:0.4px currentColor;">Authorization Plugin Modification</div>
<div class="b" style="left:770px;top:1322px;width:243px;height:40px;border:2px solid #d3dae6;border-radius:8px;box-sizing:border-box;"></div>
<svg class="s" style="left:780px;top:1322px;" width="50" height="40" viewBox="0 0 50 40" fill="none"><g stroke="#343741" stroke-width="1.7" stroke-linejoin="round"><path d="M20 9.6L10 14.5V24.9L20 30L29.7 24.9V14.5Z"/><path d="M10 14.5L20 18.9L29.7 14.5M20 18.9V30"/><path d="M23.4 11.4L15.1 16.2V21.6"/></g></svg>
<div class="t" style="left:819.10px;top:1329px;font-size:25px;line-height:25px;color:#343741;letter-spacing:0.324px;-webkit-text-stroke:0.4px currentColor;">1/1 integrations</div>
<div class="b" style="left:1056px;top:1322px;width:84px;height:40px;border:2px solid #d3dae6;border-radius:8px;box-sizing:border-box;"></div>
<svg class="s" style="left:1066px;top:1322px;" width="70" height="40" viewBox="0 0 70 40" fill="none"><g stroke="#343741" stroke-width="1.7" stroke-linejoin="round"><path d="M19.9 10.4H29.6V19.4L18.5 30L9.5 21.2Z"/><circle cx="24.3" cy="15.5" r="2.1"/><path d="M15.5 20.9L18.9 24.3M17.6 18.8L21.1 22.3"/></g></svg>
<div class="t" style="left:1106.43px;top:1329px;font-size:25px;line-height:25px;color:#343741;letter-spacing:0.000px;-webkit-text-stroke:0.4px currentColor;">4</div>
<div class="b" style="left:1186px;top:1339px;width:28px;height:2px;background:#8e99ab;"></div>
<div class="t" style="left:1555.19px;top:1325px;font-size:29px;line-height:29px;color:#343741;letter-spacing:2.400px;-webkit-text-stroke:0.4px currentColor;">13</div>
<div class="b" style="left:1878px;top:1339px;width:28px;height:2px;background:#8e99ab;"></div>
<div class="b" style="left:2210px;top:1326px;width:16px;height:16px;background:#077a72;border-radius:50%;"></div>
<div class="t" style="left:2241.48px;top:1320px;font-size:29px;line-height:29px;color:#343741;letter-spacing:0.584px;-webkit-text-stroke:0.4px currentColor;">Succeeded</div>
<div class="t" style="left:2478.90px;top:1325px;font-size:29px;line-height:29px;color:#343741;letter-spacing:0.496px;-webkit-text-stroke:0.4px currentColor;">3 minutes ago</div>
<div class="b" style="left:2848px;top:1319px;width:88px;height:40px;background:#0777cf;border-radius:20px;"></div>
<div class="b" style="left:2896px;top:1319px;width:40px;height:40px;background:#fff;border:2px solid #909398;border-radius:50%;box-sizing:border-box;"></div>
<svg class="s" style="left:2848px;top:1319px;" width="48" height="40" viewBox="0 0 48 40" fill="none"><path d="M13.8 18.4L23 27.2L38 12.6" stroke="#fff" stroke-width="2"/></svg>
<div class="b" style="left:3046px;top:1335px;width:8px;height:8px;border:2px solid #6a6d72;box-sizing:border-box;"></div>
<div class="b" style="left:3058px;top:1335px;width:8px;height:8px;border:2px solid #6a6d72;box-sizing:border-box;"></div>
<div class="b" style="left:3070px;top:1335px;width:8px;height:8px;border:2px solid #6a6d72;box-sizing:border-box;"></div>
<div class="b" style="left:44px;top:1380px;width:3058px;height:2px;background:#d3dae6;"></div>
<div class="b" style="left:60px;top:1407px;width:32px;height:32px;border:2px solid #8a8b8e;border-radius:7px;box-sizing:border-box;background:#fff;"></div>
<div class="t" style="left:122.42px;top:1409px;font-size:29px;line-height:29px;color:#0a6ab8;letter-spacing:0.403px;-webkit-text-stroke:0.4px currentColor;">Enumeration of Kernel Modules via Proc</div>
<div class="b" style="left:1056px;top:1406px;width:84px;height:40px;border:2px solid #d3dae6;border-radius:8px;box-sizing:border-box;"></div>
<svg class="s" style="left:1066px;top:1406px;" width="70" height="40" viewBox="0 0 70 40" fill="none"><g stroke="#343741" stroke-width="1.7" stroke-linejoin="round"><path d="M19.9 10.4H29.6V19.4L18.5 30L9.5 21.2Z"/><circle cx="24.3" cy="15.5" r="2.1"/><path d="M15.5 20.9L18.9 24.3M17.6 18.8L21.1 22.3"/></g></svg>
<div class="t" style="left:1106.43px;top:1413px;font-size:25px;line-height:25px;color:#343741;letter-spacing:0.000px;-webkit-text-stroke:0.4px currentColor;">4</div>
<div class="b" style="left:1186px;top:1423px;width:28px;height:2px;background:#8e99ab;"></div>
<div class="b" style="left:1555px;top:1423px;width:28px;height:2px;background:#8e99ab;"></div>
<div class="b" style="left:1878px;top:1423px;width:28px;height:2px;background:#8e99ab;"></div>
<div class="b" style="left:2210px;top:1410px;width:16px;height:16px;background:#83650a;border-radius:50%;"></div>
<div class="t" style="left:2242.67px;top:1404px;font-size:29px;line-height:29px;color:#343741;letter-spacing:-0.131px;-webkit-text-stroke:0.4px currentColor;">Warning</div>
<div class="t" style="left:2478.90px;top:1409px;font-size:29px;line-height:29px;color:#343741;letter-spacing:0.496px;-webkit-text-stroke:0.4px currentColor;">3 minutes ago</div>
<div class="b" style="left:2848px;top:1403px;width:88px;height:40px;background:#0777cf;border-radius:20px;"></div>
<div class="b" style="left:2896px;top:1403px;width:40px;height:40px;background:#fff;border:2px solid #909398;border-radius:50%;box-sizing:border-box;"></div>
<svg class="s" style="left:2848px;top:1403px;" width="48" height="40" viewBox="0 0 48 40" fill="none"><path d="M13.8 18.4L23 27.2L38 12.6" stroke="#fff" stroke-width="2"/></svg>
<div class="b" style="left:3046px;top:1419px;width:8px;height:8px;border:2px solid #6a6d72;box-sizing:border-box;"></div>
<div class="b" style="left:3058px;top:1419px;width:8px;height:8px;border:2px solid #6a6d72;box-sizing:border-box;"></div>
<div class="b" style="left:3070px;top:1419px;width:8px;height:8px;border:2px solid #6a6d72;box-sizing:border-box;"></div>
<div class="b" style="left:44px;top:1464px;width:3058px;height:2px;background:#d3dae6;"></div>
<div class="b" style="left:60px;top:1491px;width:32px;height:32px;border:2px solid #8a8b8e;border-radius:7px;box-sizing:border-box;background:#fff;"></div>
<div class="t" style="left:122.42px;top:1493px;font-size:29px;line-height:29px;color:#0a6ab8;letter-spacing:0.499px;-webkit-text-stroke:0.4px currentColor;">Masquerading Space After Filename</div>
<div class="b" style="left:770px;top:1490px;width:243px;height:40px;border:2px solid #d3dae6;border-radius:8px;box-sizing:border-box;"></div>
<svg class="s" style="left:780px;top:1490px;" width="50" height="40" viewBox="0 0 50 40" fill="none"><g stroke="#343741" stroke-width="1.7" stroke-linejoin="round"><path d="M20 9.6L10 14.5V24.9L20 30L29.7 24.9V14.5Z"/><path d="M10 14.5L20 18.9L29.7 14.5M20 18.9V30"/><path d="M23.4 11.4L15.1 16.2V21.6"/></g></svg>
<div class="t" style="left:819.10px;top:1497px;font-size:25px;line-height:25px;color:#343741;letter-spacing:0.324px;-webkit-text-stroke:0.4px currentColor;">1/1 integrations</div>
<div class="b" style="left:1056px;top:1490px;width:84px;height:40px;border:2px solid #d3dae6;border-radius:8px;box-sizing:border-box;"></div>
<svg class="s" style="left:1066px;top:1490px;" width="70" height="40" viewBox="0 0 70 40" fill="none"><g stroke="#343741" stroke-width="1.7" stroke-linejoin="round"><path d="M19.9 10.4H29.6V19.4L18.5 30L9.5 21.2Z"/><circle cx="24.3" cy="15.5" r="2.1"/><path d="M15.5 20.9L18.9 24.3M17.6 18.8L21.1 22.3"/></g></svg>
<div class="t" style="left:1106.00px;top:1497px;font-size:25px;line-height:25px;color:#343741;letter-spacing:0.000px;-webkit-text-stroke:0.4px currentColor;">5</div>
<div class="b" style="left:1186px;top:1507px;width:28px;height:2px;background:#8e99ab;"></div>
<div class="t" style="left:1556.30px;top:1493px;font-size:29px;line-height:29px;color:#343741;letter-spacing:2.400px;-webkit-text-stroke:0.4px currentColor;">38</div>
<div class="b" style="left:1878px;top:1507px;width:28px;height:2px;background:#8e99ab;"></div>
<div class="b" style="left:2210px;top:1494px;width:16px;height:16px;background:#077a72;border-radius:50%;"></div>
<div class="t" style="left:2241.48px;top:1488px;font-size:29px;line-height:29px;color:#343741;letter-spacing:0.584px;-webkit-text-stroke:0.4px currentColor;">Succeeded</div>
<div class="t" style="left:2478.90px;top:1493px;font-size:29px;line-height:29px;color:#343741;letter-spacing:0.496px;-webkit-text-stroke:0.4px currentColor;">3 minutes ago</div>
<div class="b" style="left:2848px;top:1487px;width:88px;height:40px;background:#0777cf;border-radius:20px;"></div>
<div class="b" style="left:2896px;top:1487px;width:40px;height:40px;background:#fff;border:2px solid #909398;border-radius:50%;box-sizing:border-box;"></div>
<svg class="s" style="left:2848px;top:1487px;" width="48" height="40" viewBox="0 0 48 40" fill="none"><path d="M13.8 18.4L23 27.2L38 12.6" stroke="#fff" stroke-width="2"/></svg>
<div class="b" style="left:3046px;top:1503px;width:8px;height:8px;border:2px solid #6a6d72;box-sizing:border-box;"></div>
<div class="b" style="left:3058px;top:1503px;width:8px;height:8px;border:2px solid #6a6d72;box-sizing:border-box;"></div>
<div class="b" style="left:3070px;top:1503px;width:8px;height:8px;border:2px solid #6a6d72;box-sizing:border-box;"></div>
<div class="b" style="left:44px;top:1548px;width:3058px;height:2px;background:#d3dae6;"></div>
<div class="b" style="left:60px;top:1575px;width:32px;height:32px;border:2px solid #8a8b8e;border-radius:7px;box-sizing:border-box;background:#fff;"></div>
<div class="t" style="left:122.42px;top:1577px;font-size:29px;line-height:29px;color:#0a6ab8;letter-spacing:0.254px;-webkit-text-stroke:0.4px currentColor;">Potential Internal Linux SSH Brute Force Det</div>
<div class="t" style="left:708.88px;top:1577px;font-size:29px;line-height:29px;color:#343741;letter-spacing:0.600px;-webkit-text-stroke:0.4px currentColor;">...</div>
<div class="b" style="left:770px;top:1574px;width:243px;height:40px;border:2px solid #d3dae6;border-radius:8px;box-sizing:border-box;"></div>
<svg class="s" style="left:780px;top:1574px;" width="50" height="40" viewBox="0 0 50 40" fill="none"><g stroke="#343741" stroke-width="1.7" stroke-linejoin="round"><path d="M20 9.6L10 14.5V24.9L20 30L29.7 24.9V14.5Z"/><path d="M10 14.5L20 18.9L29.7 14.5M20 18.9V30"/><path d="M23.4 11.4L15.1 16.2V21.6"/></g></svg>
<div class="t" style="left:819.10px;top:1581px;font-size:25px;line-height:25px;color:#343741;letter-spacing:0.324px;-webkit-text-stroke:0.4px currentColor;">1/1 integrations</div>
<div class="b" style="left:1056px;top:1574px;width:84px;height:40px;border:2px solid #d3dae6;border-radius:8px;box-sizing:border-box;"></div>
<svg class="s" style="left:1066px;top:1574px;" width="70" height="40" viewBox="0 0 70 40" fill="none"><g stroke="#343741" stroke-width="1.7" stroke-linejoin="round"><path d="M19.9 10.4H29.6V19.4L18.5 30L9.5 21.2Z"/><circle cx="24.3" cy="15.5" r="2.1"/><path d="M15.5 20.9L18.9 24.3M17.6 18.8L21.1 22.3"/></g></svg>
<div class="t" style="left:1106.43px;top:1581px;font-size:25px;line-height:25px;color:#343741;letter-spacing:0.000px;-webkit-text-stroke:0.4px currentColor;">4</div>
<div class="b" style="left:1186px;top:1591px;width:28px;height:2px;background:#8e99ab;"></div>
<div class="b" style="left:1555px;top:1591px;width:28px;height:2px;background:#8e99ab;"></div>
<div class="b" style="left:1878px;top:1591px;width:28px;height:2px;background:#8e99ab;"></div>
<div class="b" style="left:2210px;top:1578px;width:16px;height:16px;background:#83650a;border-radius:50%;"></div>
<div class="t" style="left:2242.67px;top:1572px;font-size:29px;line-height:29px;color:#343741;letter-spacing:-0.131px;-webkit-text-stroke:0.4px currentColor;">Warning</div>
<div class="t" style="left:2478.90px;top:1577px;font-size:29px;line-height:29px;color:#343741;letter-spacing:0.496px;-webkit-text-stroke:0.4px currentColor;">3 minutes ago</div>
<div class="b" style="left:2848px;top:1571px;width:88px;height:40px;background:#0777cf;border-radius:20px;"></div>
<div class="b" style="left:2896px;top:1571px;width:40px;height:40px;background:#fff;border:2px solid #909398;border-radius:50%;box-sizing:border-box;"></div>
<svg class="s" style="left:2848px;top:1571px;" width="48" height="40" viewBox="0 0 48 40" fill="none"><path d="M13.8 18.4L23 27.2L38 12.6" stroke="#fff" stroke-width="2"/></svg>
<div class="b" style="left:3046px;top:1587px;width:8px;height:8px;border:2px solid #6a6d72;box-sizing:border-box;"></div>
<div class="b" style="left:3058px;top:1587px;width:8px;height:8px;border:2px solid #6a6d72;box-sizing:border-box;"></div>
<div class="b" style="left:3070px;top:1587px;width:8px;height:8px;border:2px solid #6a6d72;box-sizing:border-box;"></div>
<div class="b" style="left:44px;top:1632px;width:3058px;height:2px;background:#d3dae6;"></div>
<div class="b" style="left:60px;top:1659px;width:32px;height:32px;border:2px solid #8a8b8e;border-radius:7px;box-sizing:border-box;background:#fff;"></div>
<div class="t" style="left:122.42px;top:1661px;font-size:29px;line-height:29px;color:#0a6ab8;letter-spacing:0.590px;-webkit-text-stroke:0.4px currentColor;">Linux User Account Creation</div>
<div class="b" style="left:770px;top:1658px;width:243px;height:40px;border:2px solid #d3dae6;border-radius:8px;box-sizing:border-box;"></div>
<svg class="s" style="left:780px;top:1658px;" width="50" height="40" viewBox="0 0 50 40" fill="none"><g stroke="#343741" stroke-width="1.7" stroke-linejoin="round"><path d="M20 9.6L10 14.5V24.9L20 30L29.7 24.9V14.5Z"/><path d="M10 14.5L20 18.9L29.7 14.5M20 18.9V30"/><path d="M23.4 11.4L15.1 16.2V21.6"/></g></svg>
<div class="t" style="left:819.10px;top:1665px;font-size:25px;line-height:25px;color:#343741;letter-spacing:0.324px;-webkit-text-stroke:0.4px currentColor;">1/1 integrations</div>
<div class="b" style="left:1056px;top:1658px;width:84px;height:40px;border:2px solid #d3dae6;border-radius:8px;box-sizing:border-box;"></div>
<svg class="s" style="left:1066px;top:1658px;" width="70" height="40" viewBox="0 0 70 40" fill="none"><g stroke="#343741" stroke-width="1.7" stroke-linejoin="round"><path d="M19.9 10.4H29.6V19.4L18.5 30L9.5 21.2Z"/><circle cx="24.3" cy="15.5" r="2.1"/><path d="M15.5 20.9L18.9 24.3M17.6 18.8L21.1 22.3"/></g></svg>
<div class="t" style="left:1106.43px;top:1665px;font-size:25px;line-height:25px;color:#343741;letter-spacing:0.000px;-webkit-text-stroke:0.4px currentColor;">4</div>
<div class="b" style="left:1186px;top:1675px;width:28px;height:2px;background:#8e99ab;"></div>
<div class="b" style="left:1555px;top:1675px;width:28px;height:2px;background:#8e99ab;"></div>
<div class="b" style="left:1878px;top:1675px;width:28px;height:2px;background:#8e99ab;"></div>
<div class="b" style="left:2210px;top:1662px;width:16px;height:16px;background:#83650a;border-radius:50%;"></div>
<div class="t" style="left:2242.67px;top:1656px;font-size:29px;line-height:29px;color:#343741;letter-spacing:-0.131px;-webkit-text-stroke:0.4px currentColor;">Warning</div>
<div class="t" style="left:2478.90px;top:1661px;font-size:29px;line-height:29px;color:#343741;letter-spacing:0.496px;-webkit-text-stroke:0.4px currentColor;">3 minutes ago</div>
<div class="b" style="left:2848px;top:1655px;width:88px;height:40px;background:#0777cf;border-radius:20px;"></div>
<div class="b" style="left:2896px;top:1655px;width:40px;height:40px;background:#fff;border:2px solid #909398;border-radius:50%;box-sizing:border-box;"></div>
<svg class="s" style="left:2848px;top:1655px;" width="48" height="40" viewBox="0 0 48 40" fill="none"><path d="M13.8 18.4L23 27.2L38 12.6" stroke="#fff" stroke-width="2"/></svg>
<div class="b" style="left:3046px;top:1671px;width:8px;height:8px;border:2px solid #6a6d72;box-sizing:border-box;"></div>
<div class="b" style="left:3058px;top:1671px;width:8px;height:8px;border:2px solid #6a6d72;box-sizing:border-box;"></div>
<div class="b" style="left:3070px;top:1671px;width:8px;height:8px;border:2px solid #6a6d72;box-sizing:border-box;"></div>
<div class="b" style="left:44px;top:1716px;width:3058px;height:2px;background:#d3dae6;"></div>
<div class="b" style="left:60px;top:1743px;width:32px;height:32px;border:2px solid #8a8b8e;border-radius:7px;box-sizing:border-box;background:#fff;"></div>
<div class="t" style="left:122.42px;top:1745px;font-size:29px;line-height:29px;color:#0a6ab8;letter-spacing:0.217px;-webkit-text-stroke:0.4px currentColor;">Potential External Linux SSH Brute Force De</div>
<div class="t" style="left:706.68px;top:1745px;font-size:29px;line-height:29px;color:#343741;letter-spacing:0.600px;-webkit-text-stroke:0.4px currentColor;">...</div>
<div class="b" style="left:770px;top:1742px;width:243px;height:40px;border:2px solid #d3dae6;border-radius:8px;box-sizing:border-box;"></div>
<svg class="s" style="left:780px;top:1742px;" width="50" height="40" viewBox="0 0 50 40" fill="none"><g stroke="#343741" stroke-width="1.7" stroke-linejoin="round"><path d="M20 9.6L10 14.5V24.9L20 30L29.7 24.9V14.5Z"/><path d="M10 14.5L20 18.9L29.7 14.5M20 18.9V30"/><path d="M23.4 11.4L15.1 16.2V21.6"/></g></svg>
<div class="t" style="left:819.10px;top:1749px;font-size:25px;line-height:25px;color:#343741;letter-spacing:0.324px;-webkit-text-stroke:0.4px currentColor;">1/1 integrations</div>
<div class="b" style="left:1056px;top:1742px;width:84px;height:40px;border:2px solid #d3dae6;border-radius:8px;box-sizing:border-box;"></div>
<svg class="s" style="left:1066px;top:1742px;" width="70" height="40" viewBox="0 0 70 40" fill="none"><g stroke="#343741" stroke-width="1.7" stroke-linejoin="round"><path d="M19.9 10.4H29.6V19.4L18.5 30L9.5 21.2Z"/><circle cx="24.3" cy="15.5" r="2.1"/><path d="M15.5 20.9L18.9 24.3M17.6 18.8L21.1 22.3"/></g></svg>
<div class="t" style="left:1106.43px;top:1749px;font-size:25px;line-height:25px;color:#343741;letter-spacing:0.000px;-webkit-text-stroke:0.4px currentColor;">4</div>
<div class="b" style="left:1186px;top:1759px;width:28px;height:2px;background:#8e99ab;"></div>
<div class="b" style="left:1555px;top:1759px;width:28px;height:2px;background:#8e99ab;"></div>
<div class="b" style="left:1878px;top:1759px;width:28px;height:2px;background:#8e99ab;"></div>
<div class="b" style="left:2210px;top:1746px;width:16px;height:16px;background:#83650a;border-radius:50%;"></div>
<div class="t" style="left:2242.67px;top:1740px;font-size:29px;line-height:29px;color:#343741;letter-spacing:-0.131px;-webkit-text-stroke:0.4px currentColor;">Warning</div>
<div class="t" style="left:2478.90px;top:1745px;font-size:29px;line-height:29px;color:#343741;letter-spacing:0.496px;-webkit-text-stroke:0.4px currentColor;">3 minutes ago</div>
<div class="b" style="left:2848px;top:1739px;width:88px;height:40px;background:#0777cf;border-radius:20px;"></div>
<div class="b" style="left:2896px;top:1739px;width:40px;height:40px;background:#fff;border:2px solid #909398;border-radius:50%;box-sizing:border-box;"></div>
<svg class="s" style="left:2848px;top:1739px;" width="48" height="40" viewBox="0 0 48 40" fill="none"><path d="M13.8 18.4L23 27.2L38 12.6" stroke="#fff" stroke-width="2"/></svg>
<div class="b" style="left:3046px;top:1755px;width:8px;height:8px;border:2px solid #6a6d72;box-sizing:border-box;"></div>
<div class="b" style="left:3058px;top:1755px;width:8px;height:8px;border:2px solid #6a6d72;box-sizing:border-box;"></div>
<div class="b" style="left:3070px;top:1755px;width:8px;height:8px;border:2px solid #6a6d72;box-sizing:border-box;"></div>
<div class="b" style="left:44px;top:1800px;width:3058px;height:2px;background:#d3dae6;"></div>
<div class="b" style="left:60px;top:1827px;width:32px;height:32px;border:2px solid #8a8b8e;border-radius:7px;box-sizing:border-box;background:#fff;"></div>
<div class="t" style="left:122.42px;top:1829px;font-size:29px;line-height:29px;color:#0a6ab8;letter-spacing:0.308px;-webkit-text-stroke:0.4px currentColor;">Potential SSH Password Guessing</div>
<div class="b" style="left:770px;top:1826px;width:243px;height:40px;border:2px solid #d3dae6;border-radius:8px;box-sizing:border-box;"></div>
<svg class="s" style="left:780px;top:1826px;" width="50" height="40" viewBox="0 0 50 40" fill="none"><g stroke="#343741" stroke-width="1.7" stroke-linejoin="round"><path d="M20 9.6L10 14.5V24.9L20 30L29.7 24.9V14.5Z"/><path d="M10 14.5L20 18.9L29.7 14.5M20 18.9V30"/><path d="M23.4 11.4L15.1 16.2V21.6"/></g></svg>
<div class="t" style="left:819.10px;top:1833px;font-size:25px;line-height:25px;color:#343741;letter-spacing:0.324px;-webkit-text-stroke:0.4px currentColor;">1/1 integrations</div>
<div class="b" style="left:1056px;top:1826px;width:84px;height:40px;border:2px solid #d3dae6;border-radius:8px;box-sizing:border-box;"></div>
<svg class="s" style="left:1066px;top:1826px;" width="70" height="40" viewBox="0 0 70 40" fill="none"><g stroke="#343741" stroke-width="1.7" stroke-linejoin="round"><path d="M19.9 10.4H29.6V19.4L18.5 30L9.5 21.2Z"/><circle cx="24.3" cy="15.5" r="2.1"/><path d="M15.5 20.9L18.9 24.3M17.6 18.8L21.1 22.3"/></g></svg>
<div class="t" style="left:1106.43px;top:1833px;font-size:25px;line-height:25px;color:#343741;letter-spacing:0.000px;-webkit-text-stroke:0.4px currentColor;">4</div>
<div class="b" style="left:1186px;top:1843px;width:28px;height:2px;background:#8e99ab;"></div>
<div class="b" style="left:1555px;top:1843px;width:28px;height:2px;background:#8e99ab;"></div>
<div class="b" style="left:1878px;top:1843px;width:28px;height:2px;background:#8e99ab;"></div>
<div class="b" style="left:2210px;top:1830px;width:16px;height:16px;background:#83650a;border-radius:50%;"></div>
<div class="t" style="left:2242.67px;top:1824px;font-size:29px;line-height:29px;color:#343741;letter-spacing:-0.131px;-webkit-text-stroke:0.4px currentColor;">Warning</div>
<div class="t" style="left:2478.90px;top:1829px;font-size:29px;line-height:29px;color:#343741;letter-spacing:0.496px;-webkit-text-stroke:0.4px currentColor;">3 minutes ago</div>
<div class="b" style="left:2848px;top:1823px;width:88px;height:40px;background:#0777cf;border-radius:20px;"></div>
<div class="b" style="left:2896px;top:1823px;width:40px;height:40px;background:#fff;border:2px solid #909398;border-radius:50%;box-sizing:border-box;"></div>
<svg class="s" style="left:2848px;top:1823px;" width="48" height="40" viewBox="0 0 48 40" fill="none"><path d="M13.8 18.4L23 27.2L38 12.6" stroke="#fff" stroke-width="2"/></svg>
<div class="b" style="left:3046px;top:1839px;width:8px;height:8px;border:2px solid #6a6d72;box-sizing:border-box;"></div>
<div class="b" style="left:3058px;top:1839px;width:8px;height:8px;border:2px solid #6a6d72;box-sizing:border-box;"></div>
<div class="b" style="left:3070px;top:1839px;width:8px;height:8px;border:2px solid #6a6d72;box-sizing:border-box;"></div>
<div class="b" style="left:44px;top:1884px;width:3058px;height:2px;background:#d3dae6;"></div>
</div>
<div class="frame"></div>
</body></html>
